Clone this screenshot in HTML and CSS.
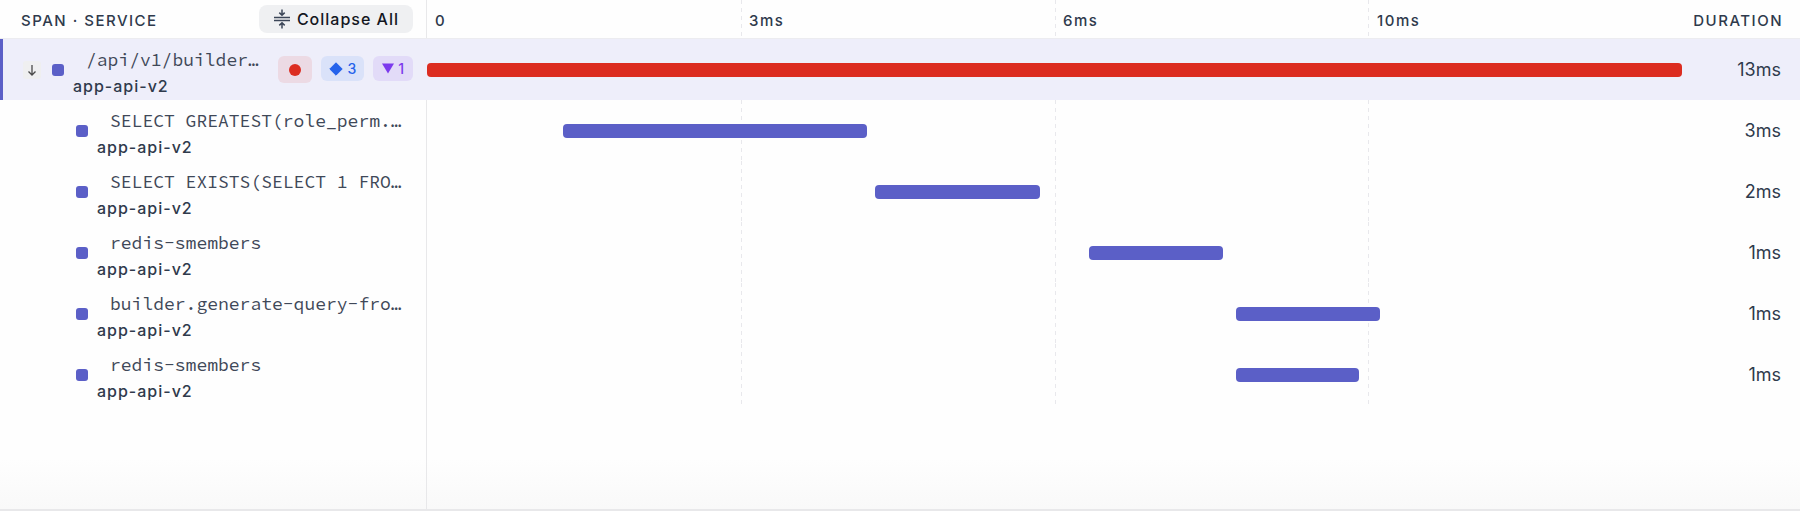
FILE: index.html
```html
<!DOCTYPE html>
<html lang="en">
  <head>
    <meta charset="UTF-8" />
    <meta name="viewport" content="width=device-width, initial-scale=1.0" />
    <title>Trace Waterfall</title>

    <link rel="stylesheet" href="styles.css">
  </head>
  <body>
    <main class="trace">
      <table class="waterfall">
        <colgroup>
          <col class="col-span" />
          <col />
          <col class="col-duration" />
        </colgroup>

        <!-- header -->
        <thead>
          <tr>
            <th scope="col">
              <div class="span-head">
                <span>SPAN · SERVICE</span>
                <button type="button" class="collapse">
                  <svg width="18" height="20" viewBox="0 0 18 20" fill="none" stroke="currentColor" stroke-width="1.5">
                    <path d="M1 8.5h16M1 11.5h16M9 0.5v5.5M6.3 3.6L9 6.3l2.7-2.7M9 19.5V14M6.3 16.4L9 13.7l2.7 2.7" />
                  </svg>
                  Collapse All
                </button>
              </div>
            </th>
            <th scope="col" class="grid-lines">
              <div class="ticks">
                <span>0</span>
                <span>3ms</span>
                <span>6ms</span>
                <span>10ms</span>
              </div>
            </th>
            <th scope="col" class="duration-head">DURATION</th>
          </tr>
        </thead>

        <!-- spans -->
        <tbody>
          <tr class="selected">
            <td>
              <div class="span-cell">
                <button type="button" class="toggle" aria-label="Collapse span">
                  <svg width="10" height="12" viewBox="0 0 10 12" fill="none" stroke="currentColor" stroke-width="1.3">
                    <path d="M5 1v10M1.5 7.5L5 11l3.5-3.5" />
                  </svg>
                </button>
                <span class="dot"></span>
                <div class="label">
                  <div class="name">/api/v1/builder…</div>
                  <div class="service">app-api-v2</div>
                </div>
                <div class="badges">
                  <span class="badge error">
                    <svg width="12" height="12" viewBox="0 0 12 12"><circle cx="6" cy="6" r="6" fill="currentColor" /></svg>
                  </span>
                  <span class="badge info">
                    <svg width="14" height="14" viewBox="0 0 14 14"><path d="M7 0.8L13.2 7 7 13.2 0.8 7z" fill="currentColor" stroke="currentColor" stroke-linejoin="round" /></svg>
                    3
                  </span>
                  <span class="badge event">
                    <svg width="12" height="11" viewBox="0 0 12 11"><path d="M0 0.5h12L6 10.5z" fill="currentColor" /></svg>
                    1
                  </span>
                </div>
              </div>
            </td>
            <td><div class="bar failed" style="margin-left: 0%; width: 99.9%"></div></td>
            <td class="duration">13ms</td>
          </tr>
          <tr>
            <td>
              <div class="span-cell child">
                <span class="dot"></span>
                <div class="label">
                  <div class="name">SELECT GREATEST(role_perm.…</div>
                  <div class="service">app-api-v2</div>
                </div>
              </div>
            </td>
            <td class="grid-lines"><div class="bar" style="margin-left: 10.8%; width: 24.2%"></div></td>
            <td class="duration">3ms</td>
          </tr>
          <tr>
            <td>
              <div class="span-cell child">
                <span class="dot"></span>
                <div class="label">
                  <div class="name">SELECT EXISTS(SELECT 1 FRO…</div>
                  <div class="service">app-api-v2</div>
                </div>
              </div>
            </td>
            <td class="grid-lines"><div class="bar" style="margin-left: 35.7%; width: 13.1%"></div></td>
            <td class="duration">2ms</td>
          </tr>
          <tr>
            <td>
              <div class="span-cell child">
                <span class="dot"></span>
                <div class="label">
                  <div class="name">redis-smembers</div>
                  <div class="service">app-api-v2</div>
                </div>
              </div>
            </td>
            <td class="grid-lines"><div class="bar" style="margin-left: 52.7%; width: 10.7%"></div></td>
            <td class="duration">1ms</td>
          </tr>
          <tr>
            <td>
              <div class="span-cell child">
                <span class="dot"></span>
                <div class="label">
                  <div class="name">builder.generate-query-fro…</div>
                  <div class="service">app-api-v2</div>
                </div>
              </div>
            </td>
            <td class="grid-lines"><div class="bar" style="margin-left: 64.4%; width: 11.5%"></div></td>
            <td class="duration">1ms</td>
          </tr>
          <tr>
            <td>
              <div class="span-cell child">
                <span class="dot"></span>
                <div class="label">
                  <div class="name">redis-smembers</div>
                  <div class="service">app-api-v2</div>
                </div>
              </div>
            </td>
            <td class="grid-lines"><div class="bar" style="margin-left: 64.4%; width: 9.8%"></div></td>
            <td class="duration">1ms</td>
          </tr>
        </tbody>
      </table>
    </main>
  </body>
</html>
```

FILE: styles.css
```css
* {
  margin: 0;
  padding: 0;
  box-sizing: border-box;
}
:root {
  --span-col: 427px;
  --duration-col: 117px;
  --indigo: #5b5fc7;
  --line: #e8e8ea;
}
body {
  font-family: "Inter", sans-serif;
  font-size: 16px;
  color: #2f3a4c;
  background-color: #fefefe;
}
button {
  font: inherit;
  border: 0;
  cursor: pointer;
}
svg {
  display: block;
  flex: none;
}
.trace {
  position: relative;
  min-height: 100vh;
  border-bottom: 2px solid var(--line);
  background: linear-gradient(to top, #f9f9f9, #fefefe 50px);
}
/* divider between span list and timeline */
.trace::before {
  content: "";
  position: absolute;
  top: 0;
  bottom: 0;
  left: calc(var(--span-col) - 1px);
  width: 1px;
  background-color: var(--line);
}
.waterfall {
  position: relative;
  width: 100%;
  table-layout: fixed;
  border-collapse: collapse;
}
.col-span {
  width: var(--span-col);
}
.col-duration {
  width: var(--duration-col);
}

/* header */
th {
  height: 39px;
  padding-top: 2px;
  font-size: 15px;
  font-weight: 500;
  letter-spacing: 0.1em;
  text-align: left;
  box-shadow: inset 0 -1px #ececf0;
}
.span-head {
  display: flex;
  align-items: center;
  justify-content: space-between;
  padding: 0 14px 0 21px;
}
.collapse {
  display: flex;
  align-items: center;
  gap: 6px;
  height: 28px;
  margin-bottom: 3px;
  padding: 0 14px;
  border-radius: 8px;
  font-size: 16px;
  font-weight: 500;
  letter-spacing: 1px;
  color: #14171f;
  background-color: #eff0f2;
}
.collapse svg {
  color: #3c4658;
}
.ticks {
  display: grid;
  grid-template-columns: repeat(4, 1fr);
}
.ticks span {
  padding-left: 8px;
}
.duration-head {
  padding-right: 17px;
  text-align: right;
}

/* rows */
td {
  height: 61px;
}
.selected {
  background-color: #eeeefa;
  box-shadow: inset 3px 0 var(--indigo);
}
.grid-lines {
  --dash: repeating-linear-gradient(to bottom, #e8e8ec 0 4px, transparent 4px 8px);
  background-image: var(--dash), var(--dash), var(--dash);
  background-position: 25% 0, 50% 0, 75% 0;
  background-size: 1px 100%;
  background-repeat: no-repeat;
}
.span-cell {
  display: flex;
  align-items: center;
  padding: 0 14px 0 23px;
}
.child {
  padding: 0 20px 0 76px;
}
.toggle {
  display: flex;
  align-items: center;
  justify-content: center;
  width: 18px;
  height: 18px;
  margin-right: 11px;
  border-radius: 3px;
  color: #4a4a4a;
  background-color: #efeff0;
}
.dot {
  flex: none;
  width: 12px;
  height: 12px;
  border-radius: 3px;
  background-color: var(--indigo);
}
.label {
  flex: 1;
  min-width: 0;
  padding: 6px 0 0 9px;
}
.name {
  padding-left: 13px;
  overflow: hidden;
  font-family: "Source Code Pro", "Liberation Mono", monospace;
  font-size: 18px;
  line-height: 27px;
  white-space: nowrap;
  text-overflow: ellipsis;
  color: #3f4858;
}
.service {
  font-weight: 500;
  line-height: 27px;
  letter-spacing: 1px;
}
.badges {
  display: flex;
  align-items: flex-start;
  gap: 9px;
  margin-left: 16px;
}
.badge {
  display: flex;
  align-items: center;
  gap: 4px;
  height: 25px;
  padding: 0 8px;
  border-radius: 6px;
  font-size: 14px;
  font-weight: 500;
}
.error {
  height: 27px;
  padding: 0 11px;
  color: #dc2c20;
  background-color: #ecdae4;
}
.info {
  color: #2563eb;
  background-color: #dae2f9;
}
.event {
  padding: 0 9px;
  color: #7c3aed;
  background-color: #e2dbf8;
}
.bar {
  height: 14px;
  border-radius: 4px;
  background-color: var(--indigo);
}
.failed {
  background-color: #dc2c20;
}
.duration {
  padding-right: 19px;
  font-size: 18px;
  text-align: right;
}
```
